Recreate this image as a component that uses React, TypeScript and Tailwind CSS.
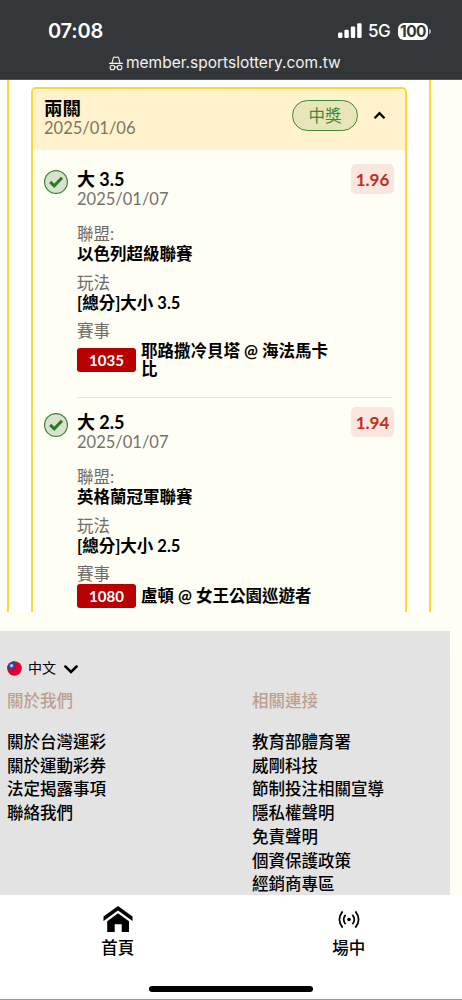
import React, { useState } from "react";

interface Leg {
    pick: string;
    date: string;
    odds: string;
    league: string;
    play: string;
    code: string;
    match: string;
}

const legs: Leg[] = [
    {
        pick: "大 3.5",
        date: "2025/01/07",
        odds: "1.96",
        league: "以色列超級聯賽",
        play: "[總分]大小 3.5",
        code: "1035",
        match: "耶路撒冷貝塔 @ 海法馬卡比",
    },
    {
        pick: "大 2.5",
        date: "2025/01/07",
        odds: "1.94",
        league: "英格蘭冠軍聯賽",
        play: "[總分]大小 2.5",
        code: "1080",
        match: "盧頓 @ 女王公園巡遊者",
    },
];

const aboutLinks = ["關於台灣運彩", "關於運動彩券", "法定揭露事項", "聯絡我們"];

const relatedLinks = [
    "教育部體育署",
    "威剛科技",
    "節制投注相關宣導",
    "隱私權聲明",
    "免責聲明",
    "個資保護政策",
    "經銷商專區",
];

const StatusBar: React.FC = () => (
    <header className="h-20 shrink-0 bg-[#343739] text-white font-['Inter','Liberation_Sans',sans-serif] border-b border-[#55585a]">
        <div className="flex items-center justify-between pl-12 pr-[31px] pt-[19px]">
            <span className="text-[20px] leading-6 font-semibold tracking-[-0.2px]">07:08</span>
            <div className="flex items-center">
                <svg width="24" height="16" viewBox="0 0 24 16" fill="white">
                    <rect x="0" y="9.5" width="4.4" height="5.5" rx="1.2" />
                    <rect x="6.4" y="6.8" width="4.4" height="8.2" rx="1.2" />
                    <rect x="12.8" y="3.5" width="4.4" height="11.5" rx="1.2" />
                    <rect x="19.2" y="0.3" width="4.4" height="14.7" rx="1.2" />
                </svg>
                <span className="ml-[6px] w-[24px] text-[17px] leading-6 font-medium tracking-[-0.5px]">5G</span>
                <span className="ml-[6px] w-[30px] h-[17px] rounded-[6px] bg-white text-[#343739] text-[15.5px] leading-[17px] font-bold text-center tracking-[-0.6px]">100</span>
                <span className="ml-px w-[2px] h-[5px] rounded-r-full bg-[#a8aaab]" />
            </div>
        </div>
        <div className="mt-[10px] flex items-center justify-center pr-[18px] text-[#f0f1f1]">
            <svg width="14" height="15" viewBox="0 0 14 15" fill="none" stroke="currentColor" strokeWidth="1.1" strokeLinejoin="round" strokeLinecap="round">
                <path d="M3 7.2 4.3 1.9Q4.6.8 5.7 1.1L7 1.4l1.3-.3Q9.4.8 9.7 1.9L11 7.2M.6 7.4h12.8" />
                <circle cx="3.4" cy="11.5" r="2.3" />
                <circle cx="10.6" cy="11.5" r="2.3" />
                <path d="M5.7 11.2Q7 10.4 8.3 11.2" />
            </svg>
            <span className="ml-[3px] w-[209px] whitespace-nowrap text-[15.5px] leading-5">member.sportslottery.com.tw</span>
        </div>
    </header>
);

const LegRow: React.FC<{ leg: Leg; last: boolean }> = ({ leg, last }) => (
    <div className="flex items-start pl-[11px] pr-[11px]">
        <svg className="mt-[1px] shrink-0" width="24" height="24" viewBox="0 0 24 24" fill="none">
            <circle cx="12" cy="12" r="11.4" fill="#d8e2cd" stroke="#3b8439" strokeWidth="1.2" />
            <path d="M6.2 11.9 10.2 15.8 18 7.8" stroke="#287a24" strokeWidth="3" />
        </svg>
        <div className={`ml-[9px] flex-1 text-[16.5px] leading-5 ${last ? "" : "h-[242.5px]"}`}>
            <div className="flex justify-between">
                <div>
                    <p className="text-[18px] font-bold">{leg.pick}</p>
                    <p className="text-[#73726e]">{leg.date}</p>
                </div>
                <span className="-mt-[5px] w-[43px] h-[30px] rounded-[5px] bg-[#f8e6df] text-[#c12d22] text-center text-[17px] leading-[31px] font-bold">
                    {leg.odds}
                </span>
            </div>
            <p className="mt-[15px] text-[#6d6c68]">聯盟:</p>
            <p className="font-bold">{leg.league}</p>
            <p className="mt-[9px] text-[#6d6c68]">玩法</p>
            <p className="font-bold">{leg.play}</p>
            <p className="mt-2 text-[#6d6c68]">賽事</p>
            <div className={`flex items-center ${last ? "mt-0" : "mt-[1px]"}`}>
                <span className="w-[59px] h-6 shrink-0 rounded-[3px] bg-[#b80000] text-white text-center text-[15px] leading-6 font-bold">
                    {leg.code}
                </span>
                <p className="ml-[5px] w-[190px] leading-[18px] font-bold">{leg.match}</p>
            </div>
            {!last && <hr className="mt-[19px] mr-[2px] border-t-[1.5px] border-[#eae7e3]" />}
        </div>
    </div>
);

const TicketCard: React.FC = () => {
    const [open, setOpen] = useState(true);

    return (
        <section className="h-[532px] ml-[7px] w-[424px] shrink-0 overflow-hidden border-x-2 border-[#ffd92f] bg-white px-[22px] pt-[7px]">
            <div className="h-[600px] rounded-t-[5px] border-2 border-[#ffd92f] bg-[#fffef5]">
                <div className="h-[61px] flex items-start justify-between rounded-t-[3px] bg-[#fff2cc] pl-[11px] pr-[19px]">
                    <div className="pt-[9px] leading-5">
                        <p className="text-[18.5px] font-bold">兩關</p>
                        <p className="text-[16.5px] text-[#7c7664]">2025/01/06</p>
                    </div>
                    <div className="flex items-center pt-[11px]">
                        <span className="w-[66px] h-[31px] rounded-full border-[1.3px] border-[#418838] bg-[#e8e6b9] text-center text-[16.5px] leading-[30px] text-[#418838]">
                            中獎
                        </span>
                        <button type="button" onClick={() => setOpen(!open)} className="ml-[15px] cursor-pointer">
                            <svg className={open ? "" : "rotate-180"} width="13" height="9" viewBox="0 0 13 9" fill="none" stroke="black" strokeWidth="2.3">
                                <path d="M1.5 7.2 6.5 2.2 11.5 7.2" />
                            </svg>
                        </button>
                    </div>
                </div>
                {open && (
                    <div className="pt-[19px]">
                        {legs.map((leg, i) => (
                            <LegRow key={leg.code} leg={leg} last={i === legs.length - 1} />
                        ))}
                    </div>
                )}
            </div>
        </section>
    );
};

const Footer: React.FC = () => (
    <footer className="mt-[19px] h-[264px] w-[450px] shrink-0 overflow-hidden bg-[#e3e3e3] pt-[26px] pl-[7px]">
        <div className="flex h-[22px] items-center">
            <svg width="15" height="15" viewBox="0 0 15 15">
                <clipPath id="flag">
                    <circle cx="7.5" cy="7.5" r="7.3" />
                </clipPath>
                <g clipPath="url(#flag)">
                    <rect width="15" height="15" fill="#dc0032" />
                    <rect width="7.5" height="7.5" fill="#174c9e" />
                    <circle cx="4.6" cy="4.7" r="1.9" fill="#72a4d8" />
                    <circle cx="4.6" cy="4.7" r="1" fill="#d5e6f5" />
                </g>
            </svg>
            <span className="ml-[6px] text-[14px] leading-[22px]">中文</span>
            <svg className="ml-[8px] mt-[2px]" width="14" height="9" viewBox="0 0 14 9" fill="none" stroke="black" strokeWidth="2.5" strokeLinecap="round">
                <path d="M1.4 1.5 7 7 12.6 1.5" />
            </svg>
        </div>
        <div className="mt-[10px] flex text-[16.5px] font-medium">
            <div className="w-[245px]">
                <h3 className="leading-[24px] text-[#bda08f]">關於我們</h3>
                <ul className="mt-[18px] leading-[23.7px]">
                    {aboutLinks.map((link) => (
                        <li key={link}>{link}</li>
                    ))}
                </ul>
            </div>
            <div>
                <h3 className="leading-[24px] text-[#bda08f]">相關連接</h3>
                <ul className="mt-[18px] leading-[23.7px]">
                    {relatedLinks.map((link) => (
                        <li key={link}>{link}</li>
                    ))}
                </ul>
            </div>
        </div>
    </footer>
);

const TabBar: React.FC = () => (
    <nav className="relative h-[105px] shrink-0 border-b border-[#9a9a9a] bg-white text-[16.5px] font-medium">
        <div className="flex">
            <div className="flex w-[240px] flex-col items-center">
                <svg className="mt-[11px]" width="30" height="27" viewBox="0 0 30 27" fill="black">
                    <path d="M15 0 29.5 10.6V15L15 4.6.5 15V10.6Z" />
                    <path d="M15 7.2 26 15.2V26H18.7V18.3H11.7V26H4.2V15.2Z" />
                </svg>
                <span className="mt-[3px] leading-6">首頁</span>
            </div>
            <div className="flex w-[231px] flex-col items-center">
                <svg className="mt-[15px]" width="22" height="19" viewBox="0 0 22 19" fill="none" stroke="black" strokeWidth="1.7">
                    <circle cx="11" cy="9.5" r="1.8" fill="black" stroke="none" />
                    <path d="M7.6 4.9Q3.8 9.5 7.6 14.1M14.4 4.9Q18.2 9.5 14.4 14.1M4.6 1.4Q-1.8 9.5 4.6 17.6M17.4 1.4Q23.8 9.5 17.4 17.6" />
                </svg>
                <span className="mt-[7px] leading-6">場中</span>
            </div>
        </div>
        <div className="absolute left-[149px] bottom-[7px] h-[6px] w-[164px] rounded-full bg-black" />
    </nav>
);

const App: React.FC = () => {
    return (
        <div
            lang="zh-TW"
            className="flex h-[1000px] w-[462px] flex-col overflow-hidden bg-[#fffef5] text-black font-['Lato','Noto_Sans_CJK_TC',sans-serif]"
        >
            <StatusBar />
            <TicketCard />
            <Footer />
            <TabBar />
        </div>
    );
};

export default App;
